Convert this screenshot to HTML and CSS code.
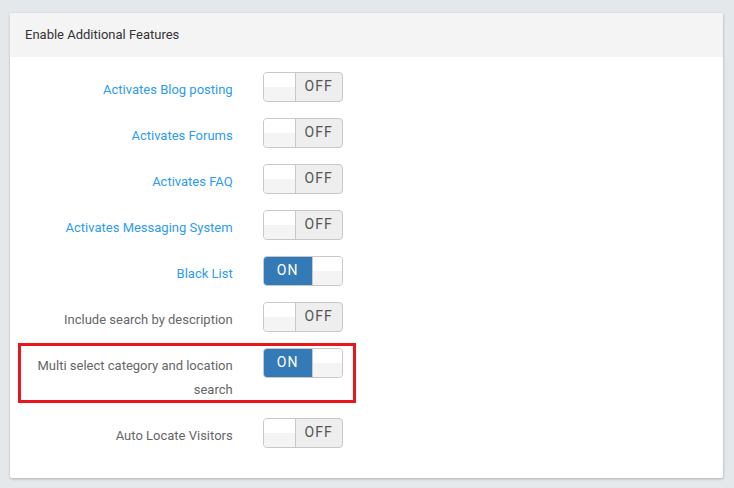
FILE: index.html
```html
<!DOCTYPE html>
<html>
<head>
<meta charset="utf-8">
<link rel="stylesheet" href="styles.css">
</head>
<body>
<div class="card">
  <div class="card-head">Enable Additional Features</div>
  <div class="card-body">
    <div class="row"><div class="label link">Activates Blog posting</div><div class="ctl"><span class="sw off"><span class="knob"></span><span class="txt">OFF</span></span></div></div>
    <div class="row"><div class="label link">Activates Forums</div><div class="ctl"><span class="sw off"><span class="knob"></span><span class="txt">OFF</span></span></div></div>
    <div class="row"><div class="label link">Activates FAQ</div><div class="ctl"><span class="sw off"><span class="knob"></span><span class="txt">OFF</span></span></div></div>
    <div class="row"><div class="label link">Activates Messaging System</div><div class="ctl"><span class="sw off"><span class="knob"></span><span class="txt">OFF</span></span></div></div>
    <div class="row"><div class="label link">Black List</div><div class="ctl"><span class="sw on"><span class="txt">ON</span><span class="knob"></span></span></div></div>
    <div class="row"><div class="label">Include search by description</div><div class="ctl"><span class="sw off"><span class="knob"></span><span class="txt">OFF</span></span></div></div>
    <div class="row highlight"><div class="label">Multi select category and location search</div><div class="ctl"><span class="sw on"><span class="txt">ON</span><span class="knob"></span></span></div></div>
    <div class="row"><div class="label">Auto Locate Visitors</div><div class="ctl"><span class="sw off"><span class="knob"></span><span class="txt">OFF</span></span></div></div>
  </div>
</div>
</body>
</html>
```
FILE: styles.css
```css
html, body { margin: 0; padding: 0; }
body {
  background: #e4e8eb;
  font-family: Roboto, "Liberation Sans", sans-serif;
  font-size: 13px;
  color: #555;
  padding: 13px 11px 9px 10px;
}
.card {
  background: #fff;
  border-radius: 2px;
  box-shadow: 0 1px 3px rgba(0,0,0,0.18), 1px 1px 2px rgba(0,0,0,0.08);
}
.card-head {
  background: #f4f4f4;
  height: 44px;
  line-height: 43px;
  padding: 0 15px;
  color: #333;
  font-size: 13px;
  border-radius: 2px 2px 0 0;
}
.card-body {
  padding: 15px 0 30px;
}
.row {
  display: flex;
  align-items: flex-start;
  margin-bottom: 16px;
  position: relative;
}
.row:last-child { margin-bottom: 0; }
.label {
  flex: 0 0 33.3333%;
  box-sizing: border-box;
  padding: 6px 15px 0;
  text-align: right;
  line-height: 24px;
  color: #666;
}
.label.link { color: #2e9bef; }
.ctl {
  padding-left: 15px;
}
.highlight::after {
  content: "";
  position: absolute;
  left: 8px;
  top: -5px;
  width: 332px;
  height: 54px;
  border: 3px solid #e8161b;
  pointer-events: none;
}
.sw {
  display: flex;
  width: 80px;
  height: 30px;
  box-sizing: border-box;
  border: 1px solid #c8c8c8;
  border-radius: 4px;
  overflow: hidden;
  background: #eeeeee;
}
.knob {
  flex: 0 0 31px;
  background: linear-gradient(#ffffff 50%, #f4f4f4 50%);
}
.off .knob { border-right: 1px solid #c8c8c8; }
.txt {
  flex: 1;
  text-align: center;
  font-size: 14px;
  letter-spacing: 1px;
  line-height: 26px;
  color: #555;
}
.on .txt {
  background: #337ab7;
  color: #fff;
  flex: 0 0 48px;
  border-right: 1px solid #c8c8c8;
}
```
